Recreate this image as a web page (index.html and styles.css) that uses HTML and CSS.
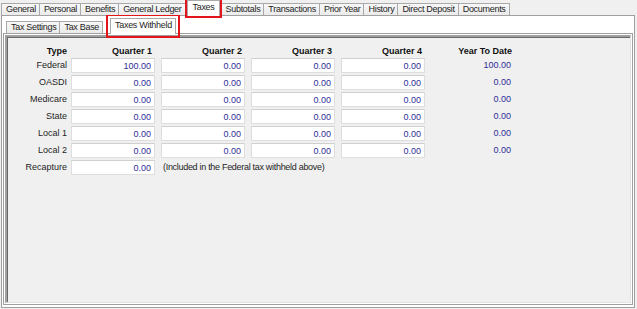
FILE: index.html
```html
<!DOCTYPE html>
<html>
<head>
<meta charset="utf-8">
<link rel="stylesheet" href="styles.css">
</head>
<body>
<div class="tabs outer-tabs">
  <div class="tab">General</div>
  <div class="tab">Personal</div>
  <div class="tab">Benefits</div>
  <div class="tab">General Ledger</div>
  <div class="tab sel mark-outer">Taxes</div>
  <div class="tab">Subtotals</div>
  <div class="tab">Transactions</div>
  <div class="tab">Prior Year</div>
  <div class="tab">History</div>
  <div class="tab">Direct Deposit</div>
  <div class="tab">Documents</div>
</div>
<div class="panel">
  <div class="tabs inner-tabs">
    <div class="tab">Tax Settings</div>
    <div class="tab">Tax Base</div>
    <div class="tab sel mark-inner">Taxes Withheld</div>
  </div>
  <div class="page">
    <div class="sunken">
      <div class="grid">
        <div class="hd lbl">Type</div>
        <div class="hd num">Quarter 1</div>
        <div class="hd num">Quarter 2</div>
        <div class="hd num">Quarter 3</div>
        <div class="hd num">Quarter 4</div>
        <div class="hd num">Year To Date</div>

        <div class="lbl">Federal</div>
        <input class="fld" value="100.00" readonly>
        <input class="fld" value="0.00" readonly>
        <input class="fld" value="0.00" readonly>
        <input class="fld" value="0.00" readonly>
        <div class="ytd">100.00</div>

        <div class="lbl">OASDI</div>
        <input class="fld" value="0.00" readonly>
        <input class="fld" value="0.00" readonly>
        <input class="fld" value="0.00" readonly>
        <input class="fld" value="0.00" readonly>
        <div class="ytd">0.00</div>

        <div class="lbl">Medicare</div>
        <input class="fld" value="0.00" readonly>
        <input class="fld" value="0.00" readonly>
        <input class="fld" value="0.00" readonly>
        <input class="fld" value="0.00" readonly>
        <div class="ytd">0.00</div>

        <div class="lbl">State</div>
        <input class="fld" value="0.00" readonly>
        <input class="fld" value="0.00" readonly>
        <input class="fld" value="0.00" readonly>
        <input class="fld" value="0.00" readonly>
        <div class="ytd">0.00</div>

        <div class="lbl">Local 1</div>
        <input class="fld" value="0.00" readonly>
        <input class="fld" value="0.00" readonly>
        <input class="fld" value="0.00" readonly>
        <input class="fld" value="0.00" readonly>
        <div class="ytd">0.00</div>

        <div class="lbl">Local 2</div>
        <input class="fld" value="0.00" readonly>
        <input class="fld" value="0.00" readonly>
        <input class="fld" value="0.00" readonly>
        <input class="fld" value="0.00" readonly>
        <div class="ytd">0.00</div>

        <div class="lbl">Recapture</div>
        <input class="fld" value="0.00" readonly>
        <div class="note">(Included in the Federal tax withheld above)</div>
      </div>
    </div>
  </div>
</div>
</body>
</html>
```

FILE: styles.css
```css
* { box-sizing: border-box; }

html, body {
  margin: 0;
  padding: 0;
  background: #f0f0f0;
  width: 637px;
  height: 309px;
  overflow: hidden;
  font-family: "Liberation Sans", Arial, sans-serif;
  font-size: 9px;
  color: #1e1e1e;
}

.tabs {
  display: flex;
  align-items: flex-end;
}

.outer-tabs {
  height: 15px;
  padding-left: 1px;
  position: relative;
  z-index: 2;
}

.tab {
  height: 12px;
  line-height: 11px;
  padding: 0 3px 0 4px;
  border: 1px solid #a9a9a9;
  border-bottom: none;
  background: linear-gradient(#f7f7f7, #ebebeb);
  margin-right: -1px;
  white-space: nowrap;
  letter-spacing: -0.3px;
}

.tab.sel {
  background: #ffffff;
  height: 16px;
  margin: 0 1px -1px 2px;
  padding: 1px 4px 0 5px;
  position: relative;
  z-index: 3;
  border-color: #a9a9a9;
}

.mark-outer {
  outline: 2px solid #e3151b;
  outline-offset: 0;
}

.mark-inner {
  outline: 2px solid #e3151b;
  outline-offset: 2px;
}

.panel {
  margin-left: 1px;
  width: 634px;
  height: 293px;
  border: 1px solid #a0a0a0;
  background: #ffffff;
  position: relative;
  z-index: 1;
}

.inner-tabs {
  height: 17px;
  padding-left: 4px;
  position: relative;
  z-index: 2;
}

.inner-tabs .tab.sel {
  margin-left: 8px;
  height: 16px;
  padding: 1px 3px 0 4px;
}

.page {
  margin-left: 1px;
  width: 630px;
  height: 272px;
  border: 1px solid #a0a0a0;
  padding: 1px;
  background: #ffffff;
}

.sunken {
  height: 100%;
  background: #f0f0f0;
  border-top: 2px solid #a0a0a0;
  border-left: 2px solid #a0a0a0;
  border-right: 1px solid #e3e3e3;
  border-bottom: 1px solid #e3e3e3;
  box-shadow: inset 1px 1px 0 #696969;
}

.grid {
  display: grid;
  grid-template-columns: 64px repeat(5, 90px);
  grid-template-rows: 21px;
  grid-auto-rows: 17px;
}

.hd {
  font-weight: bold;
  color: #111;
  padding-top: 9px;
  line-height: 11px;
}

.hd.num {
  width: 84px;
  text-align: right;
  padding-right: 3px;
}

.lbl {
  text-align: right;
  padding-right: 4px;
  line-height: 15px;
}

.hd.lbl {
  line-height: 11px;
}

.fld {
  width: 84px;
  height: 15px;
  margin: 0;
  border: 1px solid #dedede;
  border-top-color: #d0d0d0;
  background: #ffffff;
  font: inherit;
  color: #2e2e98;
  text-align: right;
  padding: 0 3px 0 0;
  line-height: 13px;
  outline: none;
}

.ytd {
  width: 84px;
  text-align: right;
  padding-right: 4px;
  color: #2e2e98;
  line-height: 15px;
}

.note {
  grid-column: 3 / 7;
  padding-left: 2px;
  line-height: 15px;
  white-space: nowrap;
  letter-spacing: -0.3px;
}
```
